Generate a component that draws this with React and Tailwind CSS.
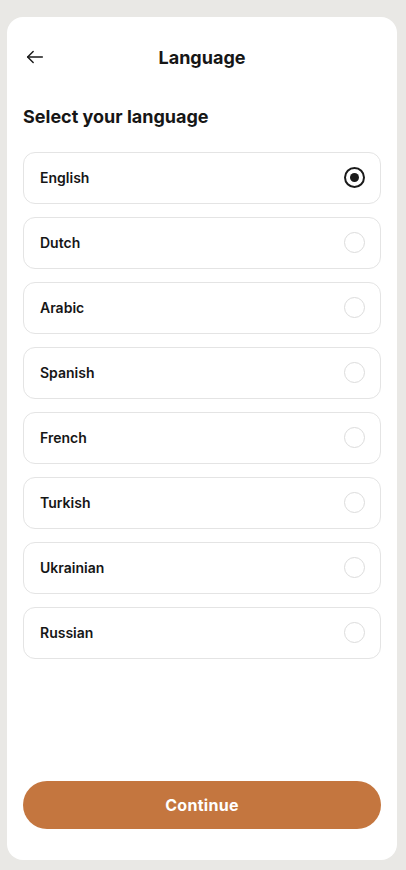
import React, { useState } from 'react';

const languages = ['English', 'Dutch', 'Arabic', 'Spanish', 'French', 'Turkish', 'Ukrainian', 'Russian'];

const BackArrow = () => (
  <svg width="22" height="22" viewBox="0 0 24 24" fill="none" stroke="#1a1a1a" strokeWidth="1.6" strokeLinecap="round" strokeLinejoin="round">
    <path d="M20 12H4" />
    <path d="M10 6l-6 6 6 6" />
  </svg>
);

const Radio = ({ checked }) =>
  checked ? (
    <span className="w-[21px] h-[21px] rounded-full border-2 border-[#1a1a1a] flex items-center justify-center">
      <span className="w-[9px] h-[9px] rounded-full bg-[#1a1a1a]" />
    </span>
  ) : (
    <span className="w-[21px] h-[21px] rounded-full border-[1.5px] border-[#dcdcdc]" />
  );

export default function App() {
  const [selected, setSelected] = useState('English');

  return (
    <div className="w-[406px] h-[870px] bg-[#e9e8e5] pt-[17px] pb-[10px] pl-[7px] pr-[9px] font-['Inter',sans-serif] text-[#161616]">
      <div className="h-full bg-white rounded-[16px] flex flex-col px-4">
        {/* header */}
        <div className="relative flex items-center justify-center h-[40px] mt-[20px]">
          <button className="absolute left-[1px] top-[9px]">
            <BackArrow />
          </button>
          <h1 className="text-[18px] font-bold">Language</h1>
        </div>

        <h2 className="mt-[30px] text-[18px] font-bold leading-[20px]">Select your language</h2>

        <div className="mt-[25px] flex flex-col gap-[13px]">
          {languages.map((lang) => (
            <button
              key={lang}
              onClick={() => setSelected(lang)}
              className="h-[52px] flex items-center justify-between pl-[16px] pr-[15px] pb-[1px] border border-[#e4e4e4] rounded-[12px] bg-white"
            >
              <span className="text-[14px] font-semibold">{lang}</span>
              <Radio checked={selected === lang} />
            </button>
          ))}
        </div>

        <div className="flex-1" />

        <button className="h-[48px] mb-[31px] rounded-full bg-[#c4763f] text-white text-[16px] font-bold tracking-[0.3px]">
          Continue
        </button>
      </div>
    </div>
  );
}
